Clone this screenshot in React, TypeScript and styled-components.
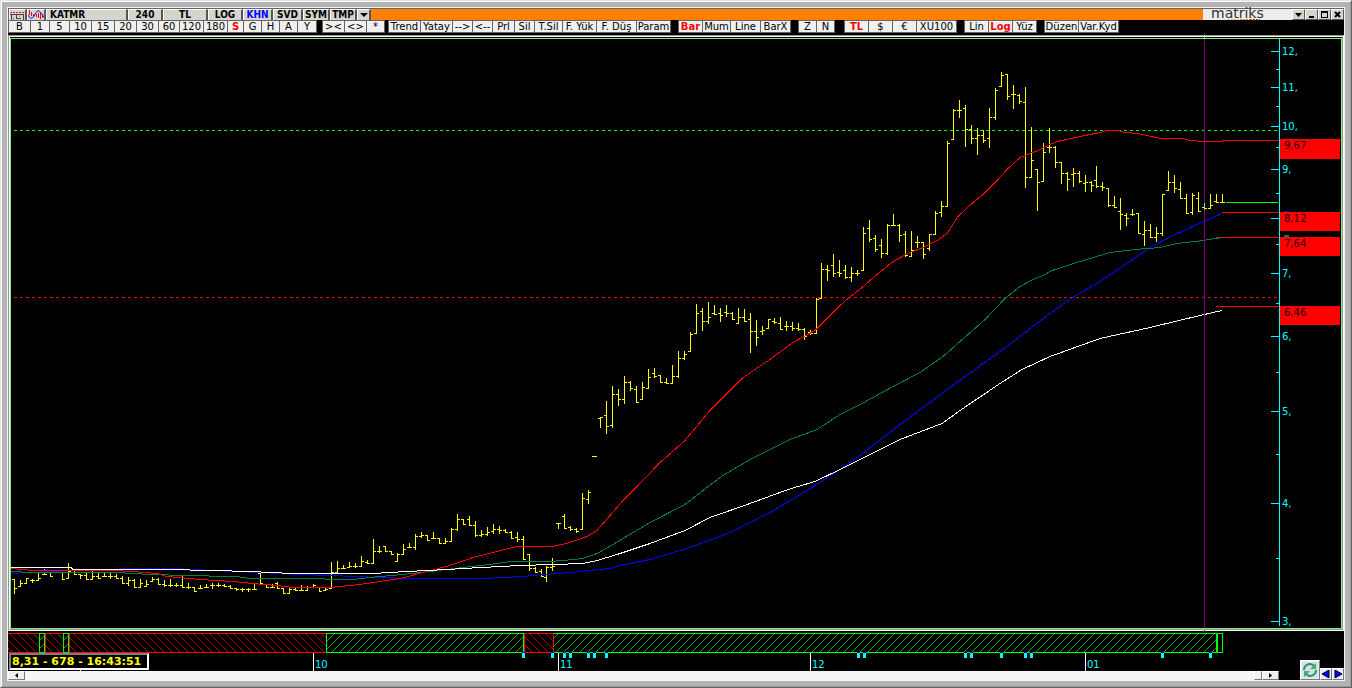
import React from "react";
import styled, { createGlobalStyle, css } from "styled-components";

const GlobalStyle = createGlobalStyle`
  * { box-sizing: border-box; }
  body {
    margin: 0;
    background: #b3b3b3;
    font-family: "DejaVu Sans", Verdana, sans-serif;
    font-size: 10px;
  }
  button { font: inherit; color: inherit; margin: 0; padding: 0; }
`;

/* ---------- window frame ---------- */

const Window = styled.div`
  height: 100vh;
  min-height: 320px;
  border: 1px solid;
  border-color: #e3e3e3 #646464 #646464 #e3e3e3;
`;

const Bezel = styled.div`
  height: 100%;
  padding: 5px;
  background: #b3b3b3;
  border: 1px solid;
  border-color: #fff #999 #999 #fff;
`;

const Content = styled.main`
  height: 100%;
  display: flex;
  flex-direction: column;
  background: #000;
  border: 1px solid #f4f4f4;
`;

/* ---------- title bar ---------- */

const TitleBar = styled.header`
  flex: none;
  height: 12px;
  display: flex;
  background: #ff8000;
  border-top: 1px solid #646464;
  border-left: 1px solid #646464;
`;

const TitleButton = styled.button<{ $w: number; $left?: boolean; $color?: string }>`
  flex: none;
  width: ${(p) => p.$w}px;
  height: 11px;
  padding: 0 0 0 ${(p) => (p.$left ? 3 : 0)}px;
  font: bold 10px/10px "DejaVu Sans Condensed", "DejaVu Sans", sans-serif;
  color: ${(p) => p.$color ?? "#000"};
  background: #d6d5cd;
  border: 0 solid;
  border-width: 1px 2px 0 1px;
  border-color: #fff #555 #555 #fff;
  white-space: nowrap;
  display: flex;
  align-items: center;
  justify-content: ${(p) => (p.$left ? "flex-start" : "center")};
`;

const TitleFill = styled.div`
  flex: 1;
`;

const Brand = styled.div`
  position: relative;
  flex: none;
  width: 89px;
  height: 11px;
  padding-left: 8px;
  background: #ececec;
  color: #333;
  font: 14px/9px "DejaVu Sans", sans-serif;
`;

const BrandDots = styled.svg`
  position: absolute;
  left: 25px;
  bottom: 0;
`;

const WindowButtons = styled.div`
  flex: none;
  display: flex;
  background: #d6d5cd;
`;

const WindowButton = styled.button`
  width: 13px;
  height: 11px;
  display: flex;
  align-items: center;
  justify-content: center;
  background: #d6d5cd;
  border: 1px solid;
  border-color: #fff #555 #555 #fff;
`;

/* ---------- toolbar ---------- */

const Toolbar = styled.nav`
  flex: none;
  height: 15px;
  display: flex;
  background: #000;
`;

const Group = styled.div<{ $gap: number }>`
  flex: none;
  display: flex;
  height: 13px;
  margin-left: ${(p) => p.$gap}px;
  border-left: 1px solid #646464;
`;

const Tool = styled.button<{ $w: number; $active?: boolean }>`
  display: flex;
  align-items: center;
  justify-content: center;
  width: ${(p) => p.$w}px;
  height: 13px;
  padding-top: 1px;
  line-height: 12px;
  white-space: nowrap;
  background: #f0f0f0;
  color: #000;
  border: solid #646464;
  border-width: 1px 1px 1px 0;
  ${(p) =>
    p.$active &&
    css`
      color: #f00;
      font-weight: bold;
    `}
`;

/* ---------- chart ---------- */

const ChartPanel = styled.section`
  flex: 1;
  min-height: 0;
  border: 1px solid #969696;
  border-right-color: #fff;
  border-bottom-color: #fff;
`;

const ChartEdge = styled.div`
  height: 100%;
  border: 1px solid #fff;
  border-bottom-color: #969696;
  border-right-color: #969696;
  padding-top: 1px;
`;

const ChartArea = styled.div`
  height: 100%;
  display: flex;
  border: 1px solid #78f078;
`;

const Plot = styled.svg`
  position: relative;
  flex: 1;
  min-width: 0;
  height: 100%;
  overflow: visible;
`;

const PriceAxis = styled.svg`
  flex: none;
  width: 62px;
  height: 100%;
`;

/* ---------- signal strip, time axis, scroll bar ---------- */

const Strip = styled.svg`
  flex: none;
  display: block;
  width: 100%;
  height: 22px;
`;

const Footer = styled.footer`
  position: relative;
  flex: none;
`;

const TimeAxis = styled.svg`
  display: block;
  width: 100%;
  height: 18px;
  overflow: visible;
`;

const Status = styled.output`
  position: absolute;
  top: 0;
  left: 1px;
  width: 140px;
  height: 17px;
  padding: 0 0 0 1px;
  background: #000;
  color: #ff0;
  font: bold 11px/13px "DejaVu Sans", Verdana, sans-serif;
  white-space: nowrap;
  border: 2px solid;
  border-color: #808080 #fff #fff #808080;
`;

const ScrollRow = styled.div`
  height: 9px;
  display: flex;
  padding-right: 65px;
`;

const ScrollTrack = styled.div`
  flex: 1;
  background: repeating-conic-gradient(#fff 0 25%, #ededed 0 50%) 0 0 / 2px 2px;
`;

const ScrollButton = styled.button<{ $w: number }>`
  width: ${(p) => p.$w}px;
  height: 9px;
  display: flex;
  align-items: center;
  justify-content: center;
  background: #f0f0f0;
  border: 1px solid;
  border-color: #fff #777 #777 #fff;
`;

const Corner = styled.div`
  position: absolute;
  right: 0;
  bottom: 0;
  display: flex;
  align-items: flex-end;
`;

const CornerButton = styled.button<{ $size: number }>`
  width: ${(p) => p.$size}px;
  height: ${(p) => p.$size}px;
  display: flex;
  align-items: center;
  justify-content: center;
  background: #ececf6;
  border: 1px solid;
  border-color: #fff #777 #777 #fff;
`;

/* ---------- data ---------- */

type Bar = [x: number, high: number, low: number, open: number, close: number];

// Quotes are kept per block, in thirds of a pixel from the block's own origin.
const blocks: { x: number; y: number; bars: Bar[] }[] = [
  {
    x: 0,
    y: 540,
    bars: [
      [43, 118, 161, 118, 146], [61, 121, 141, 138, 130], [79, 113, 132, 130, 115], [97, 117, 129, 121, 121],
      [115, 98, 124, 121, 115], [133, 86, 104, 104, 104], [151, 93, 108, 97, 108], [169, 93, 97, 97, 97],
      [187, 93, 118, 94, 118], [205, 69, 116, 116, 94], [223, 93, 106, 97, 103], [241, 101, 117, 103, 106],
      [259, 96, 118, 106, 118], [277, 93, 120, 118, 108], [295, 97, 116, 108, 114], [313, 97, 110, 108, 109],
      [331, 99, 116, 109, 108], [349, 101, 118, 109, 115], [367, 107, 131, 115, 130], [385, 110, 137, 130, 121],
      [403, 118, 142, 121, 141], [421, 118, 142, 141, 131], [439, 119, 142, 139, 132], [457, 111, 124, 124, 118],
      [475, 115, 136, 118, 133], [493, 120, 140, 133, 135], [511, 116, 142, 135, 135], [529, 128, 142, 135, 135],
      [547, 106, 142, 135, 141], [565, 129, 146, 141, 142], [583, 141, 154, 141, 153], [601, 136, 148, 145, 145],
      [619, 132, 144, 142, 141], [637, 130, 146, 135, 135], [655, 128, 142, 135, 135], [673, 132, 142, 135, 138],
      [691, 135, 146, 138, 144], [709, 143, 153, 145, 148], [727, 145, 155, 148, 148], [745, 145, 155, 148, 148],
      [763, 130, 150, 148, 148], [781, 96, 135, 99, 131], [799, 131, 142, 133, 141], [817, 133, 145, 141, 142],
      [832, 126, 147, 130, 144], [850, 144, 160, 145, 159], [868, 140, 160, 159, 148], [886, 144, 154, 148, 152],
      [904, 135, 154, 151, 150], [922, 138, 154, 150, 142], [940, 132, 141, 141, 136], [958, 141, 153, 142, 153],
      [976, 142, 152, 150, 148],
    ],
  },
  {
    x: 330,
    y: 500,
    bars: [
      [4, 186, 265, 264, 216], [22, 184, 220, 217, 205], [40, 196, 206, 205, 205], [58, 186, 202, 201, 198],
      [76, 190, 203, 198, 198], [94, 168, 200, 198, 184], [112, 180, 193, 187, 190], [130, 117, 190, 190, 154],
      [148, 139, 160, 154, 154], [166, 138, 157, 139, 154], [184, 154, 166, 155, 163], [202, 160, 185, 184, 163],
      [220, 132, 164, 163, 148], [238, 129, 145, 141, 142], [256, 102, 151, 142, 109], [274, 97, 115, 109, 106],
      [292, 105, 121, 106, 121], [310, 97, 117, 115, 115], [328, 115, 130, 115, 130], [346, 114, 131, 130, 123],
      [364, 84, 124, 124, 88], [382, 42, 92, 88, 58], [400, 58, 76, 58, 73], [418, 48, 75, 58, 75],
      [436, 64, 112, 76, 106], [454, 91, 112, 106, 103], [472, 82, 108, 103, 97], [490, 73, 101, 94, 88],
      [508, 79, 103, 88, 91], [526, 88, 100, 91, 97], [544, 94, 115, 97, 115], [562, 97, 127, 112, 117],
      [580, 109, 178, 118, 178], [598, 162, 214, 163, 205], [616, 201, 218, 205, 217], [634, 208, 230, 214, 229],
      [649, 197, 245, 233, 202], [667, 174, 212, 202, 198], [685, 70, 88, 70, 70], [703, 43, 86, 49, 85],
      [721, 79, 94, 82, 88], [739, 84, 100, 88, 94], [757, -22, 88, 88, -6], [775, -30, 11, -3, -24],
    ],
  },
  {
    x: 560,
    y: 290,
    bars: [
      [103, 498, 501, 499, 499], [121, 382, 413, 385, 382], [139, 333, 431, 376, 409], [157, 288, 413, 406, 313],
      [175, 297, 347, 313, 328], [193, 259, 341, 328, 277], [211, 273, 302, 277, 295], [229, 288, 338, 298, 337],
      [247, 276, 328, 328, 292], [265, 238, 295, 295, 262], [283, 235, 265, 250, 259], [301, 256, 277, 256, 277],
      [319, 265, 280, 277, 280], [337, 226, 280, 280, 259], [355, 183, 263, 259, 205], [373, 184, 209, 205, 193],
      [391, 127, 184, 184, 133], [409, 42, 130, 130, 70], [427, 55, 122, 64, 94], [445, 36, 101, 94, 82],
      [463, 45, 75, 70, 73], [481, 55, 96, 70, 76], [499, 45, 80, 67, 70], [517, 67, 88, 70, 88],
      [535, 55, 101, 100, 82], [553, 57, 96, 82, 94], [571, 69, 188, 88, 124], [589, 91, 167, 124, 142],
      [607, 109, 134, 124, 121], [625, 88, 115, 115, 88], [643, 84, 101, 94, 97], [661, 81, 119, 100, 118],
      [679, 93, 122, 109, 109], [697, 96, 122, 109, 115], [715, 99, 122, 115, 118], [733, 114, 149, 118, 139],
      [751, 120, 134, 127, 130], [769, 25, 130, 130, 28],
    ],
  },
  {
    x: 800,
    y: 60,
    bars: [
      [64, 609, 718, 716, 628], [82, 616, 663, 628, 631], [100, 582, 650, 616, 640], [118, 600, 650, 637, 640],
      [136, 616, 656, 631, 653], [154, 622, 665, 653, 640], [172, 630, 648, 640, 640], [190, 501, 631, 631, 520],
      [208, 480, 545, 505, 538], [226, 525, 575, 535, 568], [244, 537, 594, 556, 580], [262, 492, 584, 580, 496],
      [280, 462, 496, 496, 496], [298, 492, 545, 496, 526], [316, 514, 591, 523, 586], [334, 513, 590, 589, 571],
      [352, 528, 563, 547, 547], [370, 547, 596, 547, 583], [388, 523, 572, 565, 523], [406, 454, 523, 523, 460],
      [424, 423, 470, 457, 439], [442, 243, 439, 439, 250], [460, 148, 238, 238, 151], [478, 120, 173, 151, 151],
      [496, 136, 261, 145, 208], [514, 195, 251, 208, 235], [532, 204, 285, 235, 226], [550, 211, 248, 226, 241],
      [568, 144, 263, 235, 172], [586, 84, 179, 172, 91], [604, 36, 79, 79, 46], [622, 43, 119, 43, 109],
      [640, 75, 146, 103, 103], [658, 102, 131, 106, 124], [676, 82, 383, 127, 352], [694, 202, 355, 352, 301],
      [712, 328, 452, 328, 367], [730, 249, 364, 364, 277], [748, 204, 278, 262, 262], [766, 258, 323, 262, 307],
      [784, 307, 371, 307, 340], [802, 337, 392, 340, 358], [820, 324, 380, 343, 340],
    ],
  },
  {
    x: 1030,
    y: 120,
    bars: [
      [148, 153, 188, 160, 184], [166, 166, 215, 190, 187], [184, 182, 215, 187, 196], [199, 138, 203, 181, 199],
      [217, 187, 212, 199, 202], [235, 203, 260, 205, 257], [253, 228, 263, 257, 262], [271, 234, 329, 274, 283],
      [289, 279, 317, 286, 295], [307, 267, 287, 283, 283], [325, 280, 340, 280, 340], [343, 303, 377, 343, 331],
      [361, 312, 353, 331, 352], [379, 321, 366, 352, 340], [397, 223, 347, 340, 223], [415, 153, 214, 211, 187],
      [433, 166, 218, 187, 205], [451, 187, 235, 208, 235], [469, 222, 281, 235, 280], [487, 220, 284, 277, 226],
      [505, 217, 277, 235, 274], [523, 250, 272, 262, 265], [541, 222, 265, 265, 256], [559, 222, 250, 244, 247],
      [577, 222, 247, 247, 247],
    ],
  },
];

const barPath = blocks
  .flatMap(({ x: bx, y: by, bars }) =>
    bars.map(([x, high, low, open, close]) => {
      const cx = bx + Math.floor(x / 3);
      const top = by + Math.round(high / 3);
      const bottom = by + Math.max(Math.round(low / 3), Math.floor(Math.max(open, close) / 3) + 1);
      const left = by + Math.floor(open / 3) + 0.5;
      const right = by + Math.floor(close / 3) + 0.5;
      return `M${cx + 0.5} ${top}V${bottom}M${cx - 2} ${left}H${cx + 1}M${cx} ${right}H${cx + 3}`;
    })
  )
  .join("");

const averages = [
  {
    color: "#00f",
    points:
      "11,573 30,572 47,571 83,570 132,568 173,568 213,570 260,572 300,574 330,575 380,577 407,578 483,578 523,576 543,574 570,572 610,568 620,565 650,559 690,547 730,532 770,512 807,490 840,469 860,455 900,424 950,387 1000,351 1050,313 1071,298 1100,281 1150,247 1173,235 1197,224 1222,213",
  },
  {
    color: "#008040",
    points:
      "11,571 33,572 123,572 127,573 157,574 180,575 237,576 250,578 297,578 353,579 370,577 403,574 430,571 463,567 490,564 510,561 550,561 563,560 583,558 597,553 613,544 650,522 685,504 703,490 723,475 750,459 790,439 817,429 840,414 862,403 893,386 920,372 943,356 960,341 985,319 1005,298 1020,286 1033,279 1043,275 1052,270 1080,261 1110,252 1135,249 1160,247 1177,243 1203,240 1222,237",
  },
  {
    color: "#f00",
    points:
      "11,568 33,570 58,570 113,570 133,571 157,573 167,576 200,579 233,581 253,583 277,585 293,587 330,587 340,586 360,584 380,581 400,578 427,571 450,565 473,557 497,551 517,546 553,546 570,542 587,536 597,530 610,515 623,500 634,489 660,462 685,440 710,410 743,377 767,361 793,342 815,330 840,305 848,298 862,287 877,274 893,261 910,252 923,247 937,240 947,233 958,216 973,202 983,194 997,180 1007,169 1020,157 1030,153 1038,150 1048,145 1057,141 1067,139 1080,136 1100,132 1107,130 1118,130 1125,132 1138,133 1147,135 1160,138 1183,138 1190,140 1203,141 1222,141 1223,140 1279,140",
  },
  {
    color: "#fff",
    points:
      "11,567 71,567 73,569 167,569 213,570 250,571 293,573 373,573 407,571 447,569 463,568 520,565 553,564 583,563 597,560 617,554 650,543 685,530 710,517 750,503 788,489 815,481 840,469 870,454 900,439 942,423 960,410 1000,383 1022,369 1050,356 1100,338 1150,327 1200,315 1222,310",
  },
];

const majorTicks: [number, string][] = [
  [51, "12,"], [87, "11,"], [126, "10,"], [169, "9,"], [218, ""], [273, "7,"], [336, "6,"], [411, "5,"],
  [503, "4,"], [621, "3,"],
];
const minorTicks = [69, 106, 147, 193, 244, 303, 372, 454, 558];

const priceTags = [
  { y: 139, h: 20, text: "9,67" },
  { y: 212, h: 19, text: "8,12" },
  { y: 237, h: 19, text: "7,64" },
  { y: 306, h: 19, text: "6,46" },
];

const segments = [
  { from: 7, to: 39, up: false }, { from: 45, to: 63, up: false }, { from: 69, to: 326, up: false },
  { from: 326, to: 523, up: true }, { from: 553, to: 1216, up: true }, { from: 524, to: 553, up: false },
  { from: 39, to: 44, up: true }, { from: 63, to: 68, up: true },
];

const months: [number, string][] = [[313, "10"], [558, "11"], [810, "12"], [1085, "01"]];
const events = [522, 551, 563, 569, 587, 593, 605, 857, 863, 964, 970, 1000, 1024, 1030, 1161, 1209];

const toolGroups: { gap: number; tools: [string, number, boolean?][] }[] = [
  {
    gap: 0,
    tools: [
      ["B", 22], ["1", 19], ["5", 20], ["10", 22], ["15", 23], ["20", 22], ["30", 22], ["60", 21], ["120", 24],
      ["180", 24], ["S", 16, true], ["G", 18], ["H", 18], ["A", 18], ["Y", 19],
    ],
  },
  { gap: 5, tools: [["><", 22], ["<>", 22], ["*", 18]] },
  {
    gap: 3,
    tools: [
      ["Trend", 32], ["Yatay", 32], ["-->", 20], ["<--", 20], ["Prl", 22], ["Sil", 20], ["T.Sil", 28],
      ["F. Yük", 34], ["F. Düş", 40], ["Param", 34],
    ],
  },
  { gap: 7, tools: [["Bar", 24, true], ["Mum", 28], ["Line", 30], ["BarX", 30]] },
  { gap: 7, tools: [["Z", 18], ["N", 18]] },
  { gap: 9, tools: [["TL", 24, true], ["$", 24], ["€", 24], ["XU100", 40]] },
  { gap: 7, tools: [["Lin", 24], ["Log", 24, true], ["Yüz", 24]] },
  { gap: 7, tools: [["Düzen", 34], ["Var.Kyd", 40]] },
];

const titleButtons: { label: string; w: number; left?: boolean; color?: string }[] = [
  { label: "KATMR", w: 82, left: true },
  { label: "240", w: 35 },
  { label: "TL", w: 45 },
  { label: "LOG", w: 35 },
  { label: "KHN", w: 30, color: "#00f" },
  { label: "SVD", w: 30 },
  { label: "SYM", w: 27 },
  { label: "TMP", w: 27 },
];

// Positions on the axes scale with the panel.
const vPct = (y: number) => `${((y - 39) / 589) * 100}%`;
const hPct = (x: number) => `${((x - 8) / 1336) * 100}%`;

/* ---------- parts ---------- */

function TitleRow() {
  return (
    <TitleBar>
      <TitleButton $w={18} aria-label="Indicators">
        <svg width="15" height="9" viewBox="0 0 15 9" shapeRendering="crispEdges">
          <path d="M0 1.5H15" stroke="#d22" strokeDasharray="2 1" />
          <path d="M0 3.5H14M1.5 4V9M6.5 3V8M7 7.5H11M13.5 4V9" stroke="#444" fill="none" />
          <path d="M3.5 6V9M9.5 4V6" stroke="#e77" />
        </svg>
      </TitleButton>
      <TitleButton $w={19} aria-label="Oscillator">
        <svg width="16" height="10" viewBox="0 0 16 10">
          <path
            d="M1.5 0V5M3.5 2V6M5.5 4V6M8.5 4V7M10.5 3V8M12.5 3V9M14.5 4V8"
            stroke="#f00"
            shapeRendering="crispEdges"
          />
          <path d="M0 5C2 9 4 9 6 6S9 0 11 1S14 5 16 7" stroke="#00f" fill="none" />
        </svg>
      </TitleButton>
      {titleButtons.map((b) => (
        <TitleButton key={b.label} $w={b.w} $left={b.left} $color={b.color}>
          {b.label}
        </TitleButton>
      ))}
      <TitleButton $w={14} aria-label="Templates">
        <svg width="8" height="4" viewBox="0 0 8 4">
          <path d="M0 0H8L4 4Z" />
        </svg>
      </TitleButton>
      <TitleFill />
      <Brand>
        matriks
        <BrandDots width="32" height="1" viewBox="0 0 32 1" shapeRendering="crispEdges">
          <path d="M0 .5H12" stroke="#ffb050" strokeDasharray="2 1" />
          <path d="M12 .5H22" stroke="#f07820" strokeDasharray="2 1" />
          <path d="M22 .5H32" stroke="#d03010" strokeDasharray="2 1" />
        </BrandDots>
      </Brand>
      <WindowButtons>
        <WindowButton aria-label="Menu">
          <svg width="7" height="4" viewBox="0 0 7 4">
            <path d="M0 0H7L3.5 4Z" />
          </svg>
        </WindowButton>
        <WindowButton aria-label="Minimize">
          <svg width="7" height="7" viewBox="0 0 7 7">
            <path d="M1 5H6V7H1Z" />
          </svg>
        </WindowButton>
        <WindowButton aria-label="Maximize">
          <svg width="7" height="7" viewBox="0 0 7 7" shapeRendering="crispEdges">
            <path d="M0 0H7V7H0ZM1 2V6H6V2Z" fillRule="evenodd" />
          </svg>
        </WindowButton>
        <WindowButton aria-label="Close">
          <svg width="7" height="7" viewBox="0 0 7 7">
            <path d="M1 1L6 6M6 1L1 6" stroke="#000" strokeWidth="2" />
          </svg>
        </WindowButton>
      </WindowButtons>
    </TitleBar>
  );
}

function PricePlot() {
  return (
    <Plot
      viewBox="11 39 1268 589"
      preserveAspectRatio="none"
      shapeRendering="crispEdges"
      fill="none"
      role="img"
      aria-label="KATMR price chart"
    >
      <path d="M14 130.5H1278" stroke="#0f0" strokeDasharray="3 3" />
      <path d="M14 297.5H1278" stroke="#f00" strokeDasharray="3 3" />
      <path d={barPath} stroke="#ff0" />
      {averages.map((a) => (
        <polyline key={a.color} points={a.points} stroke={a.color} transform="translate(0 .5)" />
      ))}
      <path d="M1226 202.5H1278" stroke="#0f0" />
      <path d="M1222 212.5H1279M1216 237.5H1279M1216 306.5H1279" stroke="#f00" />
      <path d="M1216 238.5H1219M1218 237.5H1222" stroke="#008040" />
      <path d="M1204.5 33V632" stroke="#800080" />
      <path d="M1204.5 203V210M1204.5 35V39M1204.5 628V630" stroke="#78f078" />
      <path
        d={majorTicks.map(([y]) => `M1271 ${y + 0.5}H1279`).join("") + minorTicks.map((y) => `M1276 ${y + 0.5}H1279`).join("")}
        stroke="#0ff"
      />
    </Plot>
  );
}

function Prices() {
  return (
    <PriceAxis shapeRendering="crispEdges">
      <rect x="0" y="0" width="1" height={vPct(626)} fill="#0ff" />
      <rect x="5" y={vPct(211)} width="5" height="1" fill="#00f" />
      <rect x="5" y={vPct(235)} width="5" height="2" fill="#008040" />
      <rect x="1" y={vPct(140)} width="61" height="1" fill="#f00" />
      <rect x="1" y={vPct(212)} width="61" height="1" fill="#f00" />
      {majorTicks.map(([y, text]) => (
        <text key={y} x="3" y={vPct(y + 4)} fill="#0ff">
          {text}
        </text>
      ))}
      {priceTags.map((t) => (
        <g key={t.text}>
          <rect x="1" y={vPct(t.y)} width="60" height={t.h} fill="#f00" />
          <text x="5" y={vPct(t.y)} dy="10" fill="#200">
            {t.text}
          </text>
        </g>
      ))}
    </PriceAxis>
  );
}

function SignalStrip() {
  return (
    <Strip viewBox="8 631 1336 22" preserveAspectRatio="none" shapeRendering="crispEdges">
      <defs>
        <pattern id="down" width="8" height="8" patternUnits="userSpaceOnUse">
          <path d="M-1 -1L9 9M7 -1L9 1M-1 7L1 9" stroke="#f00" strokeWidth=".7" />
        </pattern>
        <pattern id="up" width="8" height="8" patternUnits="userSpaceOnUse">
          <path d="M-1 9L9 -1M-1 1L1 -1M7 9L9 7" stroke="#0f0" strokeWidth=".7" />
        </pattern>
      </defs>
      {segments.map((s) => (
        <rect
          key={s.from}
          x={s.from + 0.5}
          y="633.5"
          width={s.to - s.from}
          height="19"
          fill={s.up ? "url(#up)" : "url(#down)"}
          stroke={s.up ? "#0f0" : "#f00"}
        />
      ))}
      <path d="M1216 633H1223V653H1216ZM1218 634V652H1222V634Z" fill="#0f0" fillRule="evenodd" />
    </Strip>
  );
}

function Times() {
  return (
    <TimeAxis shapeRendering="crispEdges">
      <rect x={hPct(80)} y="17" width="1" height="1" fill="#fff" />
      {months.map(([x, text]) => (
        <g key={text}>
          <rect x={hPct(x)} y="0" width="1" height="18" fill="#fff" />
          <text x={hPct(x + 2)} y="15" fill="#0ff">
            {text}
          </text>
        </g>
      ))}
      {events.map((x) => (
        <g key={x}>
          <rect x={hPct(x)} y="-1" width="3" height="1" fill="#00f" />
          <rect x={hPct(x)} y="0" width="3" height="5" fill="#0ff" />
        </g>
      ))}
    </TimeAxis>
  );
}

export default function App() {
  return (
    <>
      <GlobalStyle />
      <Window>
        <Bezel>
          <Content>
            <TitleRow />
            <Toolbar>
              {toolGroups.map((g, i) => (
                <Group key={i} $gap={g.gap}>
                  {g.tools.map(([label, w, active]) => (
                    <Tool key={label} $w={w} $active={active}>
                      {label}
                    </Tool>
                  ))}
                </Group>
              ))}
            </Toolbar>
            <ChartPanel>
              <ChartEdge>
                <ChartArea>
                  <PricePlot />
                  <Prices />
                </ChartArea>
              </ChartEdge>
            </ChartPanel>
            <SignalStrip />
            <Footer>
              <Times />
              <ScrollRow>
                <ScrollButton $w={17} aria-label="Scroll left">
                  <svg width="3" height="5" viewBox="0 0 3 5">
                    <path d="M3 0V5L0 2.5Z" />
                  </svg>
                </ScrollButton>
                <ScrollTrack />
                <ScrollButton $w={8} aria-label="Scroll thumb" />
                <ScrollButton $w={17} aria-label="Scroll right">
                  <svg width="3" height="5" viewBox="0 0 3 5">
                    <path d="M0 0V5L3 2.5Z" />
                  </svg>
                </ScrollButton>
              </ScrollRow>
              <Status>8,31 - 678 - 16:43:51</Status>
              <Corner>
                <CornerButton $size={20} aria-label="Refresh">
                  <svg width="16" height="16" viewBox="0 0 16 16">
                    <rect width="16" height="16" fill="#d8dcf4" />
                    <g fill="none" stroke="#2a9a4a" strokeWidth="2">
                      <path d="M2 8C2 3 8 0 12 4" />
                      <path d="M14 8C14 13 8 16 4 12" />
                    </g>
                    <path d="M14 1V7H8ZM2 15V9H8Z" fill="#3cb45a" />
                  </svg>
                </CornerButton>
                <CornerButton $size={12} aria-label="Previous">
                  <svg width="8" height="8" viewBox="0 0 8 8">
                    <path d="M7 0V8L0 4Z" fill="#00f" stroke="#000" strokeWidth="1" />
                  </svg>
                </CornerButton>
                <CornerButton $size={12} aria-label="Next">
                  <svg width="8" height="8" viewBox="0 0 8 8">
                    <path d="M1 0V8L8 4Z" fill="#00f" stroke="#000" strokeWidth="1" />
                  </svg>
                </CornerButton>
              </Corner>
            </Footer>
          </Content>
        </Bezel>
      </Window>
    </>
  );
}
